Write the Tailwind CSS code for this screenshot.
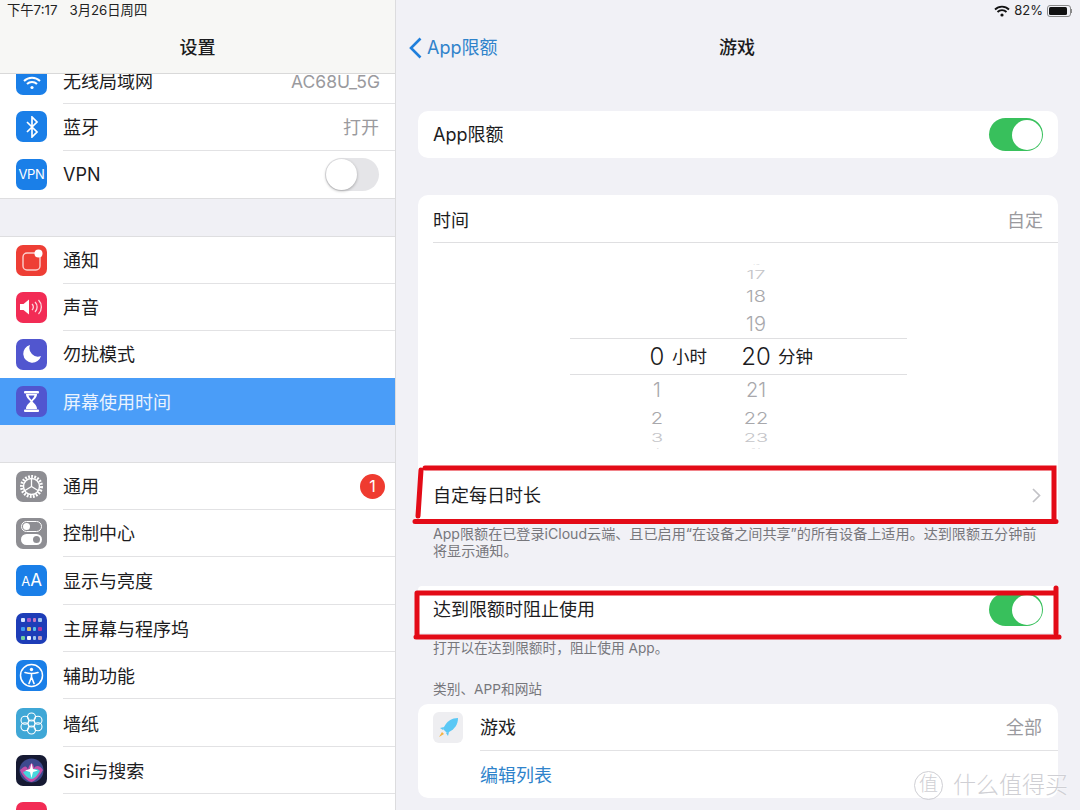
<!DOCTYPE html>
<html lang="zh">

<head>
    <meta charset="UTF-8">
    <meta name="viewport" content="width=device-width, initial-scale=1.0">
    <title>屏幕使用时间</title>
    <script src="https://cdn.jsdelivr.net/npm/@tailwindcss/browser@4"></script>
</head>

<body class="bg-[#f1f1f6] font-['Inter','Noto_Sans_CJK_SC',sans-serif] text-[#1c1c1e]">
    <div class="relative w-[1080px] h-[810px] overflow-hidden flex">

        <!-- sidebar -->
        <aside class="w-[396px] h-full shrink-0 flex flex-col bg-[#f0f0f5] border-r border-[#dcdcde] overflow-hidden">
            <header class="h-[74px] shrink-0 bg-[#f7f7f5] border-b border-[#d9d9d9] flex flex-col">
                <div class="h-[21px] pl-[7px] flex items-center gap-[12px] text-[13.300px] text-[#222]">
                    <span>下午7:17</span><span>3月26日周四</span>
                </div>
                <div class="flex-1 flex items-center justify-center text-[18px] font-medium">设置</div>
            </header>

            <section class="bg-white border-b border-[#dedee0]">
                <div class="h-[29.3px] overflow-hidden">
                    <div class="flex items-center h-[47.4px] -mt-[18px]">
                        <div class="ml-4 w-[31px] h-[31px] rounded-[7px] bg-[#1a7fe8] flex items-center justify-center shrink-0">
                            <svg width="18" height="14" viewBox="0 0 18 14" fill="none" stroke="#fff" stroke-width="2" class="mt-[6px]"><path d="M1 5a11.5 11.5 0 0 1 16 0M4 8a7 7 0 0 1 10 0"/><circle cx="9" cy="11.5" r="1.6" fill="#fff" stroke="none"/></svg>
                        </div>
                        <div class="flex-1 ml-[16px] h-full flex items-center justify-between pr-[15px] text-[18px]">
                            <span class="mt-[4px]">无线局域网</span><span class="text-[#9a9a9e] text-[17.500px] mt-[4px]">AC68U_5G</span>
                        </div>
                    </div>
                </div>
                <div class="flex items-center h-[47.4px]">
                    <div class="ml-4 w-[31px] h-[31px] rounded-[7px] bg-[#1a7fe8] flex items-center justify-center shrink-0">
                        <svg width="14" height="22" viewBox="0 0 14 22" fill="none" stroke="#fff" stroke-width="1.7"><path d="M2 6l10 10-5 5V1l5 5L2 16"/></svg>
                    </div>
                    <div class="flex-1 ml-[16px] h-full border-t border-b border-[#e2e2e4] flex items-center justify-between pt-[2px] pr-[16px] text-[18px]">
                        <span>蓝牙</span><span class="text-[#9a9a9e] text-[18px]">打开</span>
                    </div>
                </div>
                <div class="flex items-center h-[47.4px]">
                    <div class="ml-4 w-[31px] h-[31px] rounded-[7px] bg-[#1a7fe8] flex items-center justify-center shrink-0 text-white text-[13px] tracking-[-0.3px]">VPN</div>
                    <div class="flex-1 ml-[16px] h-full flex items-center justify-between pr-[16px] text-[18px]">
                        <span class="mt-[1px]">VPN</span>
                        <div class="w-[54px] h-[33px] rounded-full bg-[#e5e5e8] p-[1px] flex justify-start">
                            <div class="w-[31px] h-[31px] rounded-full bg-white shadow-[0_1px_3px_rgba(0,0,0,0.3)]"></div>
                        </div>
                    </div>
                </div>
            </section>

            <section class="mt-[36.500px] bg-white border-t border-[#dedee0]">
                <div class="flex items-center h-[47.1px]">
                    <div class="ml-4 w-[31px] h-[31px] rounded-[7px] bg-[#ee3e35] flex items-center justify-center shrink-0">
                        <svg width="24" height="24" viewBox="0 0 24 24" fill="none"><rect x="3" y="5" width="17" height="17" rx="4" stroke="#fff" stroke-opacity=".75" stroke-width="1.4"/><circle cx="18.5" cy="5.5" r="4" fill="#fff"/></svg>
                    </div>
                    <div class="flex-1 ml-[16px] h-full border-b border-[#e2e2e4] pt-[1px] flex items-center text-[18px]">通知</div>
                </div>
                <div class="flex items-center h-[47.1px]">
                    <div class="ml-4 w-[31px] h-[31px] rounded-[7px] bg-[#f22c55] flex items-center justify-center shrink-0">
                        <svg width="23" height="16" viewBox="0 0 23 16" fill="none"><path d="M0 5h3.5L9 .5v15L3.5 11H0z" fill="#fff"/><path d="M12 5a4 4 0 0 1 0 6M15 3a7 7 0 0 1 0 10M18.500 1a10 10 0 0 1 0 14" stroke="#fff" stroke-opacity=".8" stroke-width="1.300"/></svg>
                    </div>
                    <div class="flex-1 ml-[16px] h-full border-b border-[#e2e2e4] pt-[1px] flex items-center text-[18px]">声音</div>
                </div>
                <div class="flex items-center h-[47.1px]">
                    <div class="ml-4 w-[31px] h-[31px] rounded-[7px] bg-[#5156cf] flex items-center justify-center shrink-0">
                        <svg width="18" height="18" viewBox="0 0 18 18"><path d="M7 0a9 9 0 1 0 11 11A8.500 8.500 0 0 1 7 0z" fill="#fff"/></svg>
                    </div>
                    <div class="flex-1 ml-[16px] h-full flex items-center text-[18px]">勿扰模式</div>
                </div>
                <div class="flex items-center h-[47.6px] bg-[#4a9df8]">
                    <div class="ml-4 w-[31px] h-[31px] rounded-[7px] bg-[#5156cf] flex items-center justify-center shrink-0">
                        <svg width="15" height="21" viewBox="0 0 15 21" fill="#fff"><rect x="0" y="0" width="15" height="2.500" rx="1"/><rect x="0" y="18.500" width="15" height="2.500" rx="1"/><path d="M2 3h11c0 4-3 5.500-4.500 7.500C10 12.500 13 14 13 18H2c0-4 3-5.500 4.500-7.500C5 8.500 2 7 2 3z"/><path d="M4.500 4.500h6c-.5 2-2 3-3 4.500-1-1.500-2.500-2.500-3-4.500z" fill="#5156cf"/></svg>
                    </div>
                    <div class="flex-1 ml-[16px] h-full pt-[1px] flex items-center text-[18px] text-[#eaf3fe]">屏幕使用时间</div>
                </div>
            </section>

            <section class="mt-[37px] bg-white border-t border-[#dedee0] flex-1">
                <div class="flex items-center h-[46.3px]">
                    <div class="ml-4 w-[31px] h-[31px] rounded-[7px] bg-[#8e8e93] flex items-center justify-center shrink-0">
                        <svg width="25" height="25" viewBox="0 0 25 25" fill="none" stroke="#fff"><circle cx="12.500" cy="12.500" r="10" stroke-width="3" stroke-dasharray="1.800 1.300"/><circle cx="12.500" cy="12.500" r="8" stroke-width="1.500"/><path d="M12.500 12.500V5M12.500 12.500l6.500 4M12.500 12.500l-6.500 4" stroke-width="1.300"/></svg>
                    </div>
                    <div class="flex-1 ml-[16px] h-full border-b border-[#e2e2e4] flex items-center justify-between pr-[10px] text-[18px]">
                        <span>通用</span>
                        <span class="w-[25px] h-[25px] rounded-full bg-[#ef3b30] text-white text-[16px] flex items-center justify-center">1</span>
                    </div>
                </div>
                <div class="flex items-center h-[47.4px]">
                    <div class="ml-4 w-[31px] h-[31px] rounded-[7px] bg-[#8e8e93] flex flex-col gap-[2px] items-center justify-center shrink-0">
                        <div class="w-[21px] h-[11px] rounded-full border border-white p-[1px] flex justify-start"><div class="w-[7px] h-[7px] rounded-full bg-white"></div></div>
                        <div class="w-[21px] h-[11px] rounded-full bg-white p-[2px] flex justify-end"><div class="w-[7px] h-[7px] rounded-full bg-[#8e8e93]"></div></div>
                    </div>
                    <div class="flex-1 ml-[16px] h-full border-b border-[#e2e2e4] pt-[2px] flex items-center text-[18px]">控制中心</div>
                </div>
                <div class="flex items-center h-[47.4px]">
                    <div class="ml-4 w-[31px] h-[31px] rounded-[7px] bg-[#1a7fe8] flex items-center justify-center shrink-0 text-white">
                        <span class="text-[13px] mt-[2px]">A</span><span class="text-[17px]">A</span>
                    </div>
                    <div class="flex-1 ml-[16px] h-full border-b border-[#e2e2e4] pt-[2px] flex items-center text-[18px]">显示与亮度</div>
                </div>
                <div class="flex items-center h-[47.4px]">
                    <div class="ml-4 w-[31px] h-[31px] rounded-[7px] bg-[#1d3db8] grid grid-cols-4 gap-x-[2px] gap-y-[5px] p-[5px] shrink-0">
                        <i class="h-[4px] rounded-[1px] bg-[#d6e4ff]"></i><i class="h-[4px] rounded-[1px] bg-[#a259c9]"></i><i class="h-[4px] rounded-[1px] bg-[#c879c0]"></i><i class="h-[4px] rounded-[1px] bg-[#9fc5f0]"></i>
                        <i class="h-[4px] rounded-[1px] bg-[#3f9bf0]"></i><i class="h-[4px] rounded-[1px] bg-[#d8c070]"></i><i class="h-[4px] rounded-[1px] bg-[#58c0e8]"></i><i class="h-[4px] rounded-[1px] bg-[#b0359a]"></i>
                        <i class="h-[4px] rounded-[1px] bg-[#70d0a0]"></i><i class="h-[4px] rounded-[1px] bg-[#f5f5ff]"></i><i class="h-[4px] rounded-[1px] bg-[#a0c8f0]"></i><i class="h-[4px] rounded-[1px] bg-[#c09ab8]"></i>
                    </div>
                    <div class="flex-1 ml-[16px] h-full border-b border-[#e2e2e4] pt-[3px] flex items-center text-[18px]">主屏幕与程序坞</div>
                </div>
                <div class="flex items-center h-[47.4px]">
                    <div class="ml-4 w-[31px] h-[31px] rounded-[7px] bg-[#1a7fe8] flex items-center justify-center shrink-0">
                        <svg width="25" height="25" viewBox="0 0 25 25" fill="none" stroke="#fff"><circle cx="12.500" cy="12.500" r="11" stroke-width="1.500"/><circle cx="12.500" cy="6.500" r="1.700" fill="#fff" stroke="none"/><path d="M6 9.500c4 1.200 9 1.200 13 0M12.500 10.500v4M12.500 14l-2.500 6.500M12.500 14l2.500 6.500" stroke-width="1.600" stroke-linecap="round"/></svg>
                    </div>
                    <div class="flex-1 ml-[16px] h-full border-b border-[#e2e2e4] pt-[2px] flex items-center text-[18px]">辅助功能</div>
                </div>
                <div class="flex items-center h-[47.4px]">
                    <div class="ml-4 w-[31px] h-[31px] rounded-[7px] bg-[#3fa7d6] flex items-center justify-center shrink-0">
                        <svg width="23" height="23" viewBox="0 0 23 23" fill="none" stroke="#fff" stroke-width="1.100"><circle cx="11.500" cy="5" r="4"/><circle cx="11.500" cy="18" r="4"/><circle cx="5" cy="8.300" r="4"/><circle cx="18" cy="8.300" r="4"/><circle cx="5" cy="14.700" r="4"/><circle cx="18" cy="14.700" r="4"/><circle cx="11.500" cy="11.500" r="3.500"/></svg>
                    </div>
                    <div class="flex-1 ml-[16px] h-full border-b border-[#e2e2e4] pt-[3px] flex items-center text-[18px]">墙纸</div>
                </div>
                <div class="flex items-center h-[47.4px]">
                    <div class="ml-4 w-[31px] h-[31px] rounded-[7px] bg-[#161a33] flex items-center justify-center shrink-0">
                        <svg width="25" height="25" viewBox="0 0 25 25"><circle cx="12.500" cy="12.500" r="12" fill="#3d4a8f"/><path d="M1 12c4-3 6-6 8 0 1-6 5-10 6-2 2-3 6-3 9 2-4 7-8 11-11.500 12C8 23 4 19 1 12z" fill="#c24fa8"/><path d="M4 14c3-1 5-2 8-1 2-3 6-3 9 0-3 5-6 8-8.500 8S6 18 4 14z" fill="#47d6dd"/><path d="M12.500 5l1.500 6 5 1.500-5 1.500-1.500 6-1.500-6-5-1.500 5-1.500z" fill="#fff"/></svg>
                    </div>
                    <div class="flex-1 ml-[16px] h-full border-b border-[#e2e2e4] pt-[3px] flex items-center text-[18px]">Siri与搜索</div>
                </div>
                <div class="flex items-start h-[47.4px]">
                    <div class="ml-4 w-[31px] h-[31px] rounded-[7px] bg-[#f22c55] shrink-0 mt-[8px]"></div>
                </div>
            </section>
        </aside>

        <!-- detail -->
        <main class="flex-1 min-w-0 px-[22px]">
            <div class="-mx-[22px] h-[74px]">
                <div class="h-[21px] pr-[8px] flex items-center justify-end gap-[4px] text-[13px] text-[#222]">
                    <svg width="16" height="12" viewBox="0 0 16 12" fill="none" stroke="#111" stroke-width="1.800"><path d="M1 4.500a10 10 0 0 1 14 0M3.500 7a6.300 6.300 0 0 1 9 0"/><circle cx="8" cy="10" r="1.600" fill="#111" stroke="none"/></svg>
                    <span>82%</span>
                    <div class="flex items-center">
                        <div class="w-[24px] h-[12px] rounded-[3px] border border-[#8a8a8a] p-[1px]"><div class="w-[18px] h-full rounded-[1.500px] bg-[#111]"></div></div>
                        <div class="w-[1px] h-[4px] bg-[#8a8a8a]"></div>
                    </div>
                </div>
                <div class="h-[53px] grid grid-cols-[1fr_auto_1fr] items-center">
                    <div class="flex items-center pl-[12px] gap-[5px] text-[18px] text-[#2f83cb]">
                        <svg width="14" height="22" viewBox="0 0 14 22" fill="none" stroke="#1f7fdc" stroke-width="2.600"><path d="M12.500 1.500L3 11l9.500 9.500"/></svg>
                        <span>App限额</span>
                    </div>
                    <div class="text-[18px] font-medium -ml-[2px]">游戏</div>
                    <div></div>
                </div>
            </div>

            <div class="mt-[37px] h-[47px] bg-white rounded-[10px] pl-[15px] pr-[15px] flex items-center justify-between text-[18px]">
                <span>App限额</span>
                <div class="w-[54px] h-[33px] rounded-full bg-[#38c05c] p-[1.500px] flex justify-end">
                    <div class="w-[30px] h-[30px] rounded-full bg-white"></div>
                </div>
            </div>

            <div class="mt-[37px] bg-white rounded-t-[10px] h-[324px] flex flex-col">
                <div class="ml-[15px] h-[48px] shrink-0 border-b border-[#dfdfe1] pr-[15px] pt-[3px] flex items-center justify-between text-[18px]">
                    <span>时间</span><span class="text-[#9a9a9e] text-[18px]">自定</span>
                </div>
                <!-- picker -->
                <div class="flex flex-col pl-[224px] pt-[21px] h-[228px] text-[#a8a8ac] text-[20px] font-light">
                    <div class="flex h-[4px] overflow-hidden items-end text-[8px] text-[#d8d8da]"><span class="w-[100px]"></span><span class="w-[28px] text-center">16</span></div>
                    <div class="flex h-[14px] items-center"><span class="w-[100px]"></span><span class="w-[28px] text-center text-[#c4c4c8] scale-y-[.55]">17</span></div>
                    <div class="flex h-[27px] items-center"><span class="w-[100px]"></span><span class="w-[28px] text-center scale-y-[.8]">18</span></div>
                    <div class="flex h-[29px] items-center"><span class="w-[100px]"></span><span class="w-[28px] text-center">19</span></div>
                    <div class="flex h-[37px] w-[337px] items-center -ml-[72px] border-y border-[#dfdfe1] text-[#1c1c1e] text-[24px] pl-[72px] pt-[1px]">
                        <span class="w-[30px] flex justify-center">0</span>
                        <span class="w-[35px] text-[17.500px] font-normal">小时</span>
                        <span class="w-[35px]"></span>
                        <span class="w-[28px] flex justify-center">20</span>
                        <span class="ml-[8px] text-[17.500px] font-normal">分钟</span>
                    </div>
                    <div class="flex h-[30px] items-center"><span class="w-[30px] text-center">1</span><span class="w-[70px]"></span><span class="w-[28px] text-center">21</span></div>
                    <div class="flex h-[26px] items-center"><span class="w-[30px] text-center scale-y-[.8]">2</span><span class="w-[70px]"></span><span class="w-[28px] text-center scale-y-[.8]">22</span></div>
                    <div class="flex h-[14px] items-center text-[#c4c4c8]"><span class="w-[30px] text-center scale-y-[.55]">3</span><span class="w-[70px]"></span><span class="w-[28px] text-center scale-y-[.55]">23</span></div>
                    <div class="flex h-[4px] overflow-hidden text-[8px] text-[#d8d8da]"><span class="w-[30px] text-center">4</span><span class="w-[70px]"></span><span class="w-[28px] text-center">24</span></div>
                </div>
                <div class="h-[48px] pl-[15px] pr-[17px] flex items-center justify-between text-[18px]">
                    <span>自定每日时长</span>
                    <svg width="9" height="15" viewBox="0 0 9 15" fill="none" stroke="#c2c2c6" stroke-width="1.700"><path d="M1 1l6.500 6.500L1 14"/></svg>
                </div>
            </div>

            <p class="pt-[6px] px-[15px] text-[14.100px] leading-[17px] text-[#77777c] whitespace-nowrap">App限额在已登录iCloud云端、且已启用“在设备之间共享”的所有设备上适用。达到限额五分钟前<br>将显示通知。</p>

            <div class="mt-[27px] h-[47px] bg-white rounded-t-[4px] pl-[15px] pr-[15px] flex items-center justify-between text-[18px]">
                <span>达到限额时阻止使用</span>
                <div class="w-[54px] h-[33px] rounded-full bg-[#38c05c] p-[1.500px] flex justify-end">
                    <div class="w-[30px] h-[30px] rounded-full bg-white"></div>
                </div>
            </div>
            <p class="pt-[7px] px-[15px] text-[13.700px] leading-[17px] text-[#77777c]">打开以在达到限额时，阻止使用 App。</p>

            <p class="mt-[23px] px-[15px] text-[13.700px] leading-[18px] text-[#77777c]">类别、APP和网站</p>
            <div class="mt-[6px] bg-white rounded-[10px]">
                <div class="flex items-center h-[47px]">
                    <div class="ml-[15px] w-[30px] h-[31px] rounded-[6px] bg-[#eeeef1] flex items-center justify-center shrink-0">
                        <svg width="22" height="22" viewBox="0 0 22 22"><path d="M21 1c-6 0-11 3-14 9l-1 2 4 4 2-1c6-3 9-8 9-14z" fill="#5ac8f5"/><path d="M7 10L3 11l3 2zM12 15l-1 4-2-3z" fill="#5ac8f5"/><path d="M5 15l2 2-5 3z" fill="#f5b342"/></svg>
                    </div>
                    <div class="flex-1 ml-[17px] h-full border-b border-[#e2e2e4] flex items-center justify-between pr-[16px] text-[18px]">
                        <span class="mt-[1px]">游戏</span><span class="text-[#9a9a9e] text-[18px] mt-[1px]">全部</span>
                    </div>
                </div>
                <div class="h-[47px] pl-[62px] pt-[2px] flex items-center text-[18px] text-[#2f83cb]">编辑列表</div>
            </div>
        </main>

        <!-- red marker strokes drawn over the screenshot -->
        <svg class="absolute inset-0 pointer-events-none" width="1080" height="810" viewBox="0 0 1080 810" fill="none" stroke="#e30b17" stroke-width="5" stroke-linecap="round">
            <path d="M425 468H1054V520M415 521.500H1056M421 470L418 516"/>
            <path d="M417 593H1056M1056 588V633M416 637H1059M417 593V636"/>
        </svg>

        <!-- watermark -->
        <div class="absolute left-[914px] top-[770px] flex items-center gap-[10px] text-[#cfcfd4] [text-shadow:0_0_2px_#fff] font-light">
            <span class="w-[29px] h-[29px] rounded-full border border-[#cfcfd4] flex items-center justify-center text-[19px]">值</span>
            <span class="text-[23px] leading-[30px]">什么值得买</span>
        </div>
    </div>
</body>

</html>
